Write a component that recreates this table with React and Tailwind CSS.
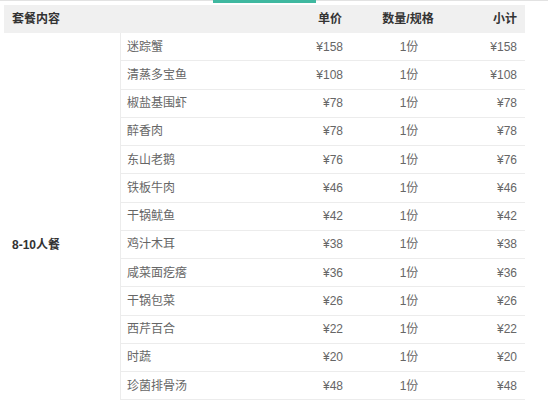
import React from 'react'

const ITEMS = [
  ['迷踪蟹', 158],
  ['清蒸多宝鱼', 108],
  ['椒盐基围虾', 78],
  ['醉香肉', 78],
  ['东山老鹅', 76],
  ['铁板牛肉', 46],
  ['干锅鱿鱼', 42],
  ['鸡汁木耳', 38],
  ['咸菜面疙瘩', 36],
  ['干锅包菜', 26],
  ['西芹百合', 22],
  ['时蔬', 20],
  ['珍菌排骨汤', 48],
]

export default function App() {
  return (
    <div className="h-[401px] w-[548px] overflow-hidden bg-white font-['Liberation_Sans','Noto_Sans_CJK_SC',sans-serif] text-[12px]">
      {/* top tab line */}
      <div className="flex h-[3px]">
        <div className="w-[213px] border-t border-[#e2e2e2]" />
        <div className="w-[103px] bg-[#3fb8a0]" />
        <div className="flex-1 border-t border-[#e2e2e2]" />
      </div>

      <div className="ml-[4px] mt-[2px] w-[521px]">
        {/* header */}
        <div className="flex h-[28px] items-center bg-[#f0f0f0] font-bold text-[#333]">
          <div className="w-[286px] pl-2">套餐内容</div>
          <div className="w-[60px] pr-2 text-right">单价</div>
          <div className="w-[116px] text-center">数量/规格</div>
          <div className="flex-1 pr-2 text-right">小计</div>
        </div>

        {/* body */}
        <div className="flex">
          <div className="flex w-[116px] items-center pl-2 pt-[57px] font-bold text-[#333]">8-10人餐</div>
          <div className="flex-1 border-l border-[#ececec] text-[#666]">
            {ITEMS.map(([name, price]) => (
              <div key={name} className="flex h-[28.25px] items-center border-b border-[#ececec]">
                <div className="w-[170px] pl-[6px]">{name}</div>
                <div className="w-[60px] pr-2 text-right">¥{price}</div>
                <div className="w-[116px] text-center">1份</div>
                <div className="flex-1 pr-2 text-right">¥{price}</div>
              </div>
            ))}
          </div>
        </div>
      </div>
    </div>
  )
}
